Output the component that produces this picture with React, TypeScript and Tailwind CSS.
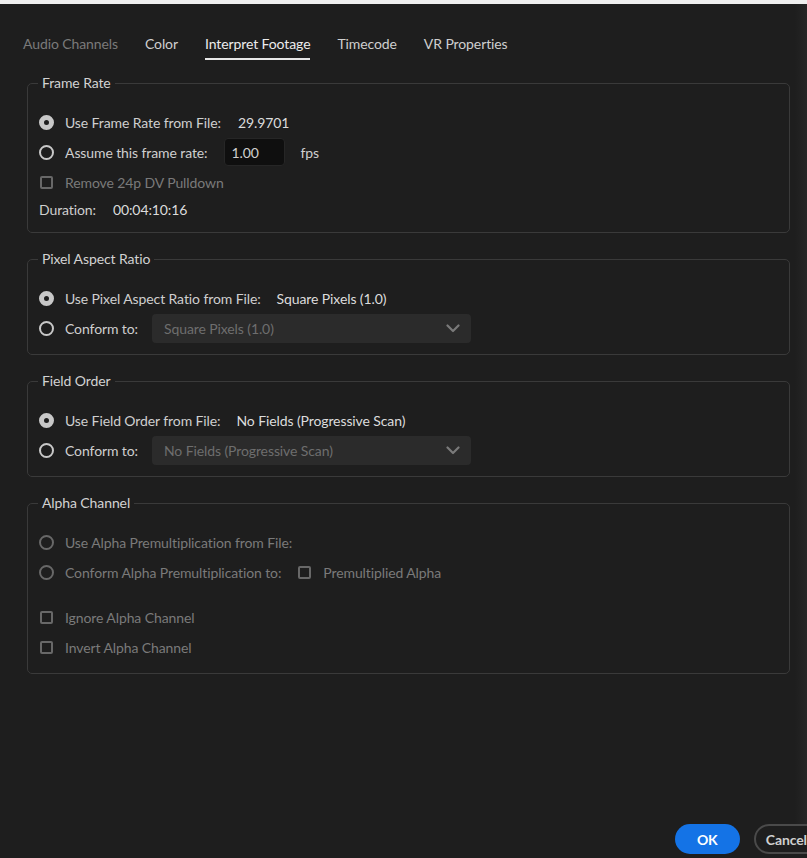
import type { ReactNode } from "react";

const FONT = { fontFamily: "Lato, 'Noto Sans', sans-serif", letterSpacing: "-0.1px" };

type Tone = "on" | "off";

function Radio({ checked = false, tone = "on" }: { checked?: boolean; tone?: Tone }) {
  const color = tone === "on" ? "border-[#c8c8c8]" : "border-[#686868]";
  return (
    <span
      className={`box-border inline-block h-[15px] w-[15px] shrink-0 rounded-full bg-[#1e1e1e] ${color} ${
        checked ? "border-[5px]" : "border-2"
      }`}
    />
  );
}

function Checkbox({ tone = "off" }: { tone?: Tone }) {
  const color = tone === "on" ? "border-[#c8c8c8]" : "border-[#686868]";
  return (
    <span className="flex w-[15px] shrink-0 justify-center">
      <span className={`box-border inline-block h-[13px] w-[13px] rounded-[2px] border-2 ${color}`} />
    </span>
  );
}

function Row({ children, className = "h-[30px]" }: { children: ReactNode; className?: string }) {
  return <div className={`flex items-center ${className}`}>{children}</div>;
}

function Option({
  control,
  label,
  muted = false,
}: {
  control: ReactNode;
  label: string;
  muted?: boolean;
}) {
  return (
    <div className="flex items-center gap-[11px]">
      {control}
      <span className={muted ? "text-[#7a7a7a]" : "text-[#cfcfcf]"}>{label}</span>
    </div>
  );
}

function Group({ title, children }: { title: string; children: ReactNode }) {
  return (
    <fieldset className="ml-[27px] box-border w-[763px] rounded-[5px] border border-[#3a3a3a] px-[11px] pt-[14px] pb-[11px]">
      <legend className="-ml-px px-[4px] text-[14px] leading-[20px] text-[#d2d2d2]">{title}</legend>
      {children}
    </fieldset>
  );
}

function Select({ value }: { value: string }) {
  return (
    <div className="flex h-[29px] w-[319px] items-center justify-between rounded-[4px] bg-[#2b2b2b] pr-[11px] pl-[12px] text-[#6e6e6e]">
      <span>{value}</span>
      <svg width="14" height="9" viewBox="0 0 14 9" fill="none">
        <path d="M1.5 1.5 L7 7 L12.5 1.5" stroke="#7a7a7a" strokeWidth="2.2" strokeLinecap="round" strokeLinejoin="round" />
      </svg>
    </div>
  );
}

const tabs = ["Audio Channels", "Color", "Interpret Footage", "Timecode", "VR Properties"];

export default function App() {
  return (
    <div className="flex h-screen w-full flex-col overflow-hidden bg-[#1e1e1e] text-[14px]" style={FONT}>
      <div className="h-[4px] shrink-0 bg-[#efefef]" />
      <div className="flex min-h-0 flex-1">
        <div className="flex min-w-0 flex-1 flex-col">
          <div className="mt-[26px] flex h-[30px] gap-[27px] pl-[23px]">
            {tabs.map((t) => {
              const active = t === "Interpret Footage";
              const muted = t === "Audio Channels";
              return (
                <div
                  key={t}
                  className={`flex h-full items-center border-b-2 pb-[2px] ${
                    active ? "border-[#e6e6e6] text-[#ececec]" : "border-transparent"
                  } ${muted ? "text-[#7a7a7a]" : active ? "" : "text-[#cfcfcf]"}`}
                >
                  {t}
                </div>
              );
            })}
          </div>

          <div className="mt-[13px] flex flex-col items-start gap-[16px]">
            <Group title="Frame Rate">
              <Row>
                <Option control={<Radio checked />} label="Use Frame Rate from File:" />
                <span className="ml-[17px] text-[#dcdcdc]">29.9701</span>
              </Row>
              <Row>
                <Option control={<Radio />} label="Assume this frame rate:" />
                <div className="ml-[16px] flex h-[28px] w-[61px] items-center rounded-[4px] border border-[#262626] bg-[#0f0f0f] pl-[7px] text-[#cfcfcf]">
                  1.00
                </div>
                <span className="ml-[16px] text-[#cfcfcf]">fps</span>
              </Row>
              <Row>
                <Option control={<Checkbox />} label="Remove 24p DV Pulldown" muted />
              </Row>
              <Row className="h-[24px]">
                <span className="text-[#cfcfcf]">Duration:</span>
                <span className="ml-[17px] text-[#dcdcdc]">00:04:10:16</span>
              </Row>
            </Group>

            <Group title="Pixel Aspect Ratio">
              <Row>
                <Option control={<Radio checked />} label="Use Pixel Aspect Ratio from File:" />
                <span className="ml-[16px] text-[#dcdcdc]">Square Pixels (1.0)</span>
              </Row>
              <Row>
                <Option control={<Radio />} label="Conform to:" />
                <div className="ml-[14px]">
                  <Select value="Square Pixels (1.0)" />
                </div>
              </Row>
            </Group>

            <Group title="Field Order">
              <Row>
                <Option control={<Radio checked />} label="Use Field Order from File:" />
                <span className="ml-[16px] text-[#dcdcdc]">No Fields (Progressive Scan)</span>
              </Row>
              <Row>
                <Option control={<Radio />} label="Conform to:" />
                <div className="ml-[14px]">
                  <Select value="No Fields (Progressive Scan)" />
                </div>
              </Row>
            </Group>

            <Group title="Alpha Channel">
              <Row>
                <Option control={<Radio tone="off" />} label="Use Alpha Premultiplication from File:" muted />
              </Row>
              <Row>
                <Option control={<Radio tone="off" />} label="Conform Alpha Premultiplication to:" muted />
                <div className="ml-[16px]">
                  <Option control={<Checkbox />} label="Premultiplied Alpha" muted />
                </div>
              </Row>
              <div className="h-[15px]" />
              <Row>
                <Option control={<Checkbox />} label="Ignore Alpha Channel" muted />
              </Row>
              <Row>
                <Option control={<Checkbox />} label="Invert Alpha Channel" muted />
              </Row>
            </Group>
          </div>
        </div>
        <div className="w-[12px] shrink-0 bg-gradient-to-r from-[#1e1e1e] to-[#262626]" />
      </div>

      <div className="mr-[-14px] flex shrink-0 justify-end gap-[14px] pb-[4px]">
        <button
          type="button"
          className="h-[30px] w-[65px] rounded-full bg-[#1473e6] text-[14px] font-bold text-white"
        >
          OK
        </button>
        <button
          type="button"
          className="h-[30px] rounded-full border-2 border-[#4a4a4a] pr-[12px] pl-[10px] text-[14px] font-bold text-[#cfcfcf]"
        >
          Cancel
        </button>
      </div>
    </div>
  );
}
